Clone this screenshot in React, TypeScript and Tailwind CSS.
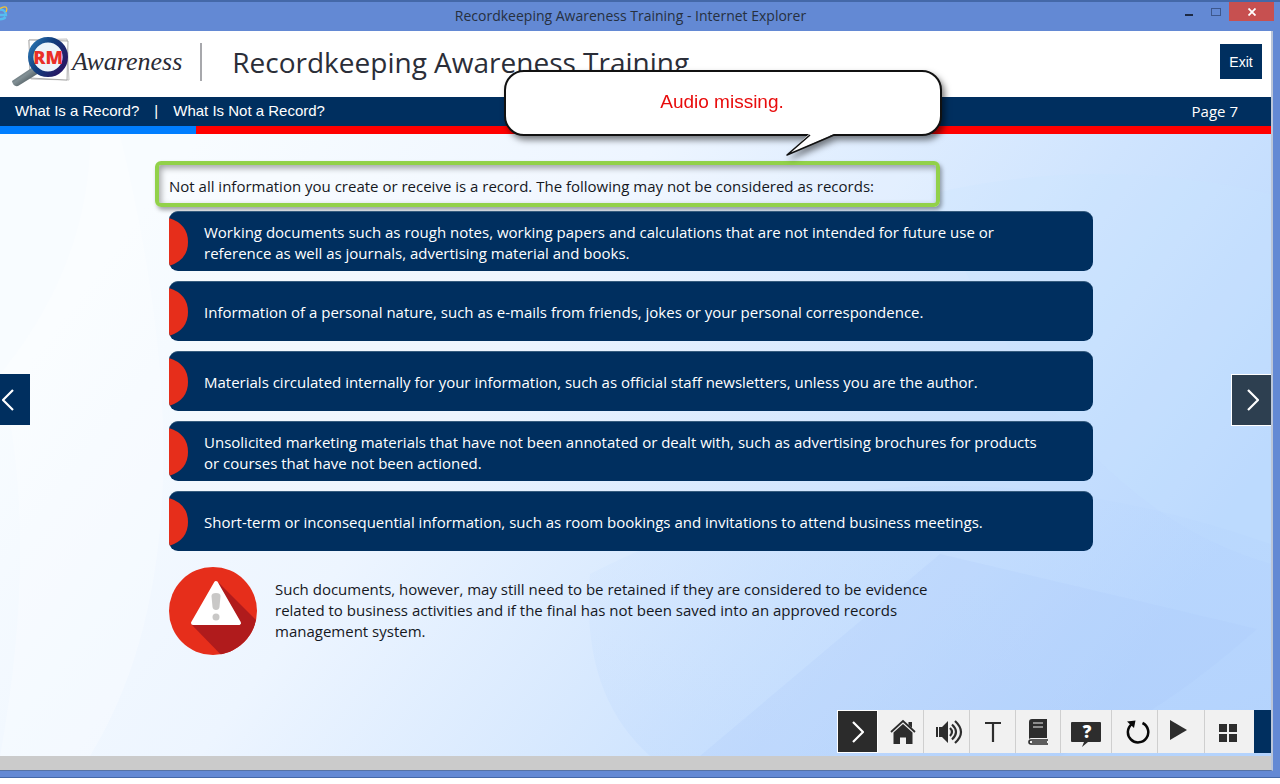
import type { ReactNode } from "react";

const items = [
  "Working documents such as rough notes, working papers and calculations that are not intended for future use or reference as well as journals, advertising material and books.",
  "Information of a personal nature, such as e-mails from friends, jokes or your personal correspondence.",
  "Materials circulated internally for your information, such as official staff newsletters, unless you are the author.",
  "Unsolicited marketing materials that have not been annotated or dealt with, such as advertising brochures for products or courses that have not been actioned.",
  "Short-term or inconsequential information, such as room bookings and invitations to attend business meetings.",
];

function TitleBar() {
  return (
    <div className="flex h-[31px] items-start border-t-2 border-[#4468a8] bg-[#6389d4]">
      <svg className="mt-1 h-4 w-2 shrink-0" viewBox="0 0 8 16" aria-hidden="true">
        <path d="M0 3.5C3.500 3.500 6 6 6 9H0M0 13.200C2.500 13.200 4.500 12.500 5.500 11" fill="none" stroke="#55bdf0" strokeWidth="2.400" />
        <path d="M0 2.500C3 .5 6.500 0 6.800 2.500C7 4 6.500 5 6 6" fill="none" stroke="#f4c430" strokeWidth="1.300" />
      </svg>
      <div className="flex-1 pt-1 pl-[78px] text-center text-sm leading-5 text-[#26303f]">
        Recordkeeping Awareness Training - Internet Explorer
      </div>
      <div className="flex">
        <button aria-label="Minimize" className="flex h-5 w-7 items-center justify-center">
          <svg width="8" height="16" aria-hidden="true"><path d="M0 11H8" stroke="#1d2a44" strokeWidth="2" /></svg>
        </button>
        <button aria-label="Maximize" className="flex h-5 w-[26px] items-center justify-center">
          <svg width="10" height="8" aria-hidden="true"><rect x=".5" y=".5" width="9" height="7" fill="none" stroke="#3d578c" /></svg>
        </button>
        <button aria-label="Close" className="mr-[6px] flex h-[19px] w-[45px] items-center justify-center bg-[#c75050]">
          <svg width="8" height="8" aria-hidden="true"><path d="M.5 .5L7.500 7.500M7.500 .5L.5 7.500" stroke="white" strokeWidth="1.800" /></svg>
        </button>
      </div>
    </div>
  );
}

function Logo() {
  return (
    <div className="flex items-center">
      <svg width="60" height="52" viewBox="0 0 60 52" aria-hidden="true">
        <defs>
          <linearGradient id="ring" x1="0" y1="0" x2="1" y2=".6">
            <stop offset="0" stopColor="#2c78b4" />
            <stop offset=".5" stopColor="#123d7c" />
            <stop offset="1" stopColor="#251a66" />
          </linearGradient>
          <linearGradient id="handle" x1="0" y1="0" x2="1" y2="1">
            <stop offset="0" stopColor="#26333a" />
            <stop offset=".45" stopColor="#829095" />
            <stop offset="1" stopColor="#1c262b" />
          </linearGradient>
        </defs>
        <path d="M17 4L55 3L57 44L19 43Z" fill="#f8f8f8" stroke="#c3c3c3" />
        <path d="M17 4L56 5L55 44L18 42Z" fill="#fff" stroke="#999" strokeWidth=".8" />
        <path d="M21 31L27 37L6 50Q1 51 0 45Z" fill="url(#handle)" />
        <circle cx="36" cy="21" r="17.300" fill="#edf4fa" stroke="url(#ring)" strokeWidth="5.400" />
        <text x="36" y="28" textAnchor="middle" fill="#ea2f27" fontFamily="Open Sans, sans-serif" fontWeight="800" fontSize="18">RM</text>
      </svg>
      <span className="font-['Liberation_Serif',serif] text-[26px] leading-8 text-[#2b2b35] italic">Awareness</span>
    </div>
  );
}

function Backdrop() {
  return (
    <svg className="absolute inset-0 h-full w-full" viewBox="0 0 1271 622" preserveAspectRatio="none" aria-hidden="true">
      <defs>
        <linearGradient id="sky" gradientUnits="userSpaceOnUse" x1="200" y1="0" x2="1050" y2="640">
          <stop offset="0" stopColor="#f8fcff" />
          <stop offset=".35" stopColor="#edf5ff" />
          <stop offset=".7" stopColor="#cfe4fe" />
          <stop offset="1" stopColor="#b9d7fe" />
        </linearGradient>
        <linearGradient id="fade" x1="0" y1="0" x2="1" y2="1">
          <stop offset="0" stopColor="#c2dcff" stopOpacity=".1" />
          <stop offset="1" stopColor="#a9cbfb" stopOpacity=".35" />
        </linearGradient>
      </defs>
      <rect width="1271" height="622" fill="url(#sky)" />
      <path d="M930 60Q1100 20 1271 60V430Q1060 370 930 60Z" fill="#c9e5ff" opacity=".2" />
      <path d="M590 440Q900 280 1271 410V622H650Q580 560 590 440Z" fill="url(#fade)" />
      <path d="M940 420L1257 495Q1150 590 1060 622H700Z" fill="#a9c8fb" opacity=".2" />
      <path d="M0 240Q40 400 0 622H90Q220 410 120 0H90Q90 130 0 240Z" fill="#fff" opacity=".25" />
    </svg>
  );
}

function Warning() {
  return (
    <svg className="shrink-0" width="88" height="88" viewBox="0 0 88 88" aria-label="Warning" role="img">
      <defs><clipPath id="disc"><circle cx="44" cy="44" r="44" /></clipPath></defs>
      <g clipPath="url(#disc)">
        <rect width="88" height="88" fill="#e62e1b" />
        <path d="M50 16L96 62V96H60L22 57Z" fill="#b01b1c" />
      </g>
      <path d="M47 16L70 56H24Z" fill="white" stroke="white" strokeWidth="4" strokeLinejoin="round" />
      <path d="M42.500 29Q42.500 26 47 26T51.500 29L50.500 40Q50 43 47 43T43.500 40Z" fill="#c9c8c7" />
      <circle cx="47" cy="50" r="3.500" fill="#c9c8c7" />
    </svg>
  );
}

function Chevron({ left = false }: { left?: boolean }) {
  return (
    <svg width="12" height="22" viewBox="0 0 12 22" fill="none" stroke="white" strokeWidth="2.200" aria-hidden="true">
      <path d={left ? "M11 1L1 11L11 21" : "M1 1L11 11L1 21"} />
    </svg>
  );
}

function Tool({ label, className, children }: { label: string; className: string; children: ReactNode }) {
  return (
    <button aria-label={label} className={`flex h-full items-center justify-center border-r border-[#cfcfcf] bg-[#f1f1f1] ${className}`}>
      {children}
    </button>
  );
}

function Toolbar() {
  return (
    <div className="relative mb-[3px] flex h-[43px] self-end">
      <button aria-label="Collapse toolbar" className="flex w-[41px] items-center justify-center border border-white bg-[#2b2b2b]">
        <Chevron />
      </button>
      <Tool label="Home" className="w-[46px] pl-1">
        <svg width="26" height="26" viewBox="0 0 26 26" aria-hidden="true">
          <path d="M1 13L13 2L25 13" fill="none" stroke="#2d2d2d" strokeWidth="1.800" />
          <path d="M13 5L22.500 13.500V25H16V18.500H10V25H3.500V13.500Z" fill="#2d2d2d" />
          <path d="M18.500 3H22V9L18.500 6Z" fill="#2d2d2d" />
        </svg>
      </Tool>
      <Tool label="Sound" className="w-[46px] pl-1">
        <svg width="28" height="26" viewBox="0 0 28 26" aria-hidden="true">
          <path d="M1 8H3V18H1ZM4 8H7L13 2V24L7 18H4Z" fill="#2d2d2d" />
          <path d="M15 9Q19 13 15 17M17 5.500Q25 13 17 20.500M20 2Q32 13 20 24" fill="none" stroke="#2d2d2d" strokeWidth="2.200" />
        </svg>
      </Tool>
      <Tool label="Transcript" className="w-[46px]">
        <svg width="16" height="20" viewBox="0 0 16 20" aria-hidden="true"><path d="M0 1H16M8 1V20" stroke="#2d2d2d" strokeWidth="2.200" fill="none" /></svg>
      </Tool>
      <Tool label="Glossary" className="w-[45px]">
        <svg width="20" height="28" viewBox="0 0 20 28" aria-hidden="true">
          <path d="M4 1H19V20H3Q1 20 1 22V4Q1 1 4 1Z" fill="#2d2d2d" />
          <path d="M5 5H15M5 9H15" stroke="#eee" strokeWidth="1.200" />
          <path d="M20 22H3Q1 22 1 24T3 26H20M4 24H19" fill="none" stroke="#2d2d2d" strokeWidth="1.600" />
        </svg>
      </Tool>
      <Tool label="Help" className="w-[51px] pt-1">
        <svg width="32" height="26" viewBox="0 0 32 26" aria-hidden="true">
          <path d="M2 1H30Q31 1 31 2V20Q31 21 30 21H18L12 26L14 21H2Q1 21 1 20V2Q1 1 2 1Z" fill="#2d2d2d" />
          <text x="17" y="17" textAnchor="middle" fill="white" fontFamily="Open Sans, sans-serif" fontWeight="800" fontSize="17">?</text>
        </svg>
      </Tool>
      <Tool label="Replay" className="w-[46px] pl-[6px]">
        <svg width="24" height="24" viewBox="0 0 24 24" aria-hidden="true">
          <path d="M16.500 3A10.200 10.200 0 1 1 6 4" fill="none" stroke="#080808" strokeWidth="2.500" />
          <path d="M1 1.500L9.500 .5L8 8Z" fill="#080808" />
        </svg>
      </Tool>
      <Tool label="Play" className="w-[47px] pr-[6px] pb-1">
        <svg width="17" height="20" viewBox="0 0 17 20" aria-hidden="true"><path d="M0 0L17 10L0 20Z" fill="#2d2d2d" /></svg>
      </Tool>
      <button aria-label="Page menu" className="flex w-[49px] items-center justify-center bg-[#f1f1f1] pt-[2px] pr-1">
        <svg width="18" height="18" viewBox="0 0 18 18" aria-hidden="true"><path d="M0 0H8V8H0ZM10 0H18V8H10ZM0 10H8V18H0ZM10 10H18V18H10Z" fill="#2d2d2d" /></svg>
      </button>
      <div className="w-[17px] bg-[#002f5f]" />
    </div>
  );
}

function Callout() {
  return (
    <div className="absolute top-[70px] left-[504px] w-[438px] drop-shadow-[3px_4px_3px_rgba(0,0,0,0.5)]">
      <div className="flex h-[66px] items-center justify-center rounded-[20px] border-2 border-[#111] bg-white pr-[2px] pb-px font-['Liberation_Sans',sans-serif] text-[19px] text-[#e80c0c]">
        Audio missing.
      </div>
      <svg className="absolute top-16 left-[281px]" width="54" height="24" viewBox="0 0 54 24" aria-hidden="true">
        <path d="M24 0L2 21L49 0" fill="white" />
        <path d="M25 1L2 21L49 1" fill="none" stroke="#111" strokeWidth="1.600" strokeLinejoin="round" />
      </svg>
    </div>
  );
}

export default function App() {
  return (
    <div className="relative flex min-h-screen flex-col bg-white pb-[6px] font-['Open_Sans',sans-serif]">
      <div className="flex flex-1 flex-col border-b border-[#4468a8] bg-[#6389d4]">
        <TitleBar />
        <div className="mr-[7px] mb-[6px] flex flex-1 flex-col border-r-2 border-b border-r-[#bac5d8] border-b-[#5572a5] bg-[#cbcbcb]">
          <header className="flex h-[66px] items-center bg-white pr-[9px] pb-[5px] pl-3">
            <Logo />
            <h1 className="ml-[18px] flex h-[38px] items-center border-l-2 border-[#a7a8ac] pl-[30px] text-[28px] leading-[38px] text-[#2b2e38]">
              Recordkeeping Awareness Training
            </h1>
            <button className="ml-auto h-[35px] w-[42px] bg-[#002f5f] font-['Liberation_Sans',sans-serif] text-sm text-white">Exit</button>
          </header>
          <nav className="flex h-[29px] items-center bg-[#002f5f] pr-[33px] pb-px pl-[15px] font-['Liberation_Sans',sans-serif] text-[15px] text-white" aria-label="Breadcrumb">
            <a href="#record">What Is a Record?</a>
            <span className="w-[34px] text-center">|</span>
            <a href="#not-record">What Is Not a Record?</a>
            <span className="ml-auto font-['Open_Sans',sans-serif]">Page 7</span>
          </nav>
          <div className="flex h-2 bg-[#ff0000]">
            <div className="w-[196px] bg-[#007eff]" />
          </div>
          <main className="relative mb-[14px] flex flex-1 flex-col">
            <Backdrop />
            <div className="relative flex flex-1 items-start">
              <button aria-label="Previous page" className="mt-60 flex h-[51px] w-[30px] shrink-0 items-center bg-[#002f5f] pl-[2px]">
                <Chevron left />
              </button>
              <section className="flex-1 pt-[27px] pr-[138px] pl-[125px] text-[15px] leading-[21px] text-[#15181e]">
                <p className="flex h-[46px] w-[785px] items-center rounded-md border-4 border-[#92d14a] bg-white/20 px-[10px] pt-1 shadow-[2px_3px_4px_rgba(0,0,0,0.35),inset_2px_3px_6px_rgba(0,0,0,0.35)]">
                  Not all information you create or receive is a record. The following may not be considered as records:
                </p>
                <ul className="mt-1 ml-[14px] flex flex-col gap-[10px]">
                  {items.map((item) => (
                    <li key={item} className="flex min-h-[60px] items-center overflow-hidden rounded-[9px] border-t border-[#365c7e] bg-[#002f5f] pr-11 text-white">
                      <svg className="shrink-0" width="19" height="48" viewBox="0 0 19 48" aria-hidden="true">
                        <path d="M0 0Q19 6 19 24T0 48Z" fill="#e62e1b" />
                      </svg>
                      <span className="ml-4 pt-[2px]">{item}</span>
                    </li>
                  ))}
                </ul>
                <div className="mt-4 ml-[14px] flex items-center gap-[18px]">
                  <Warning />
                  <p className="w-[680px] pb-[2px]">
                    Such documents, however, may still need to be retained if they are considered to be evidence related to business activities and if the final has not been saved into an approved records management system.
                  </p>
                </div>
              </section>
              <button aria-label="Next page" className="mt-60 flex h-[52px] w-10 shrink-0 items-center justify-center border border-r-0 border-white bg-[#2d3f50] pl-[3px]">
                <Chevron />
              </button>
            </div>
            <Toolbar />
          </main>
        </div>
      </div>
      <Callout />
    </div>
  );
}
